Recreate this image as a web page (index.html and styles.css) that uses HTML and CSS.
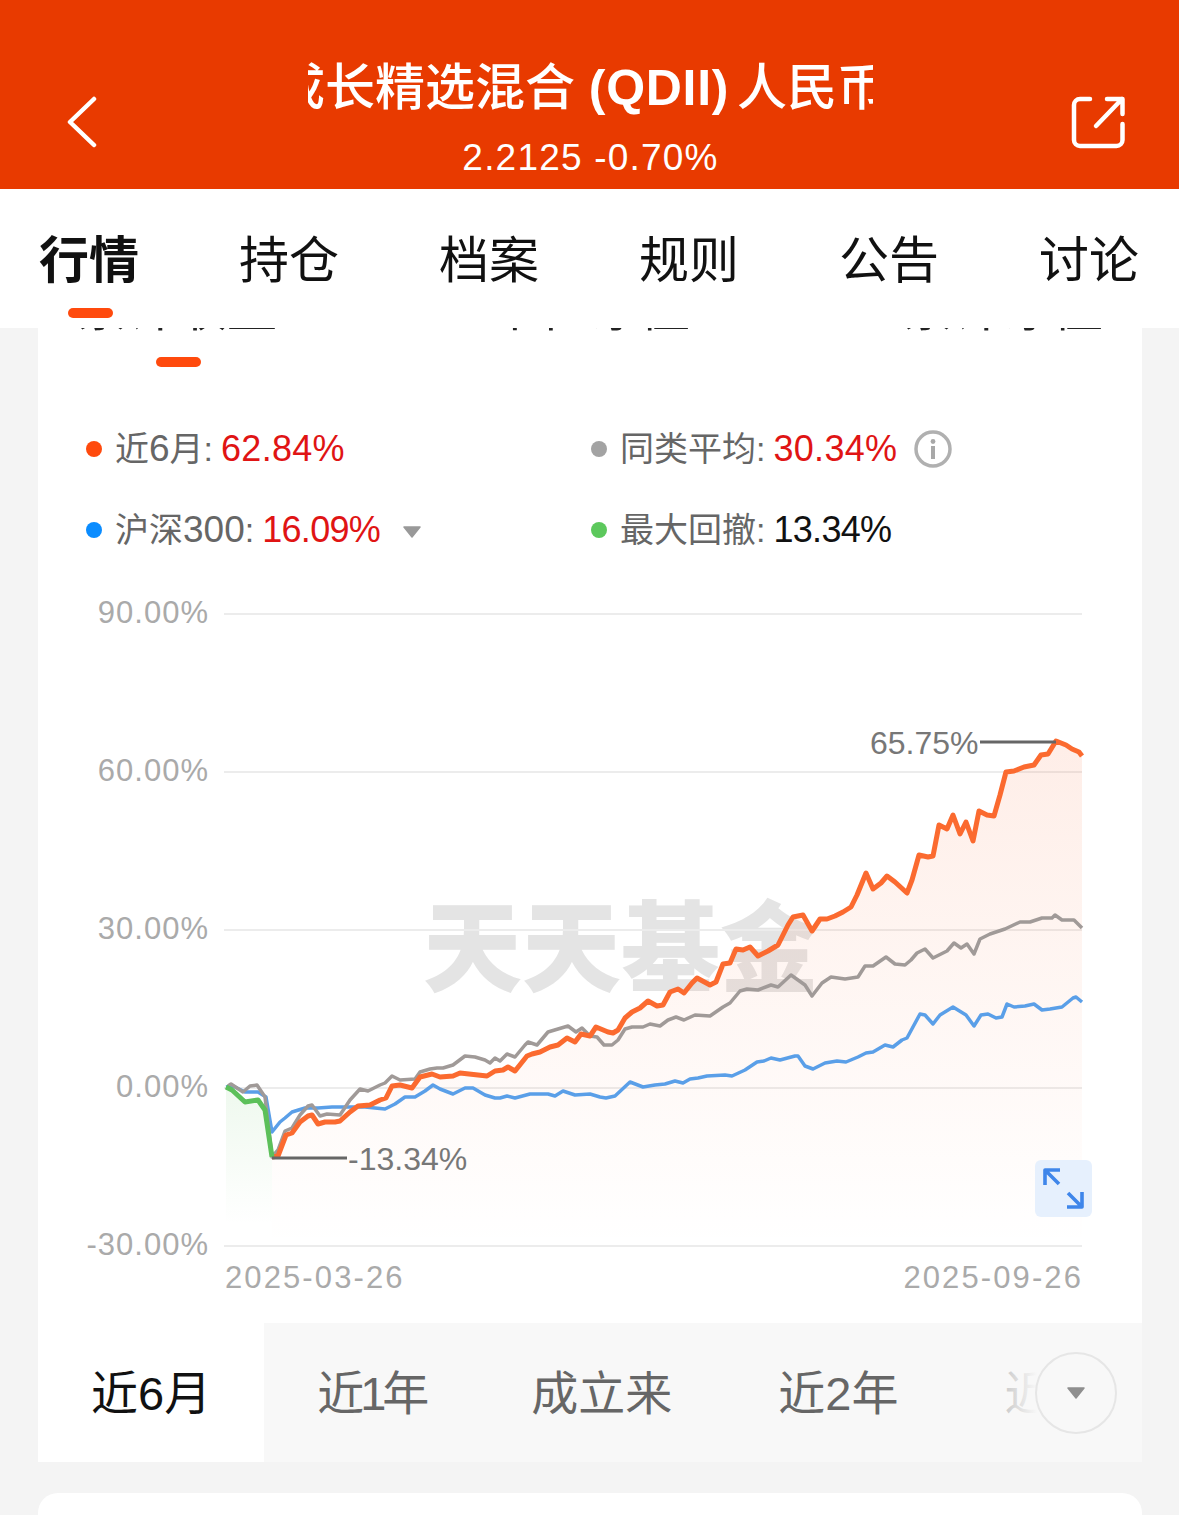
FILE: index.html

```html
<!DOCTYPE html>
<html lang="zh-CN">
<head>
  <meta charset="UTF-8" />
  <meta name="viewport" content="width=device-width, initial-scale=1.0"/>
  <title>成长精选混合 (QDII) 人民币</title>
  <link rel="stylesheet" href="styles.css">
</head>
<body>
  <header class="topbar">
    <svg class="topbar-icon" width="32" height="56" viewBox="0 0 32 56">
      <polyline points="29,5 5,28 29,51" fill="none" stroke="#fff" stroke-width="4.5" stroke-linecap="round" stroke-linejoin="round"/>
    </svg>
    <div class="topbar-center">
      <div class="fund-name"><span>成长精选混合 <b class="qdii">(QDII)</b>人民币</span></div>
      <div class="fund-price">2.2125 -0.70%</div>
    </div>
    <svg class="topbar-icon" width="58" height="56" viewBox="0 0 58 56">
      <path d="M21 5H11a6 6 0 0 0-6 6v35a6 6 0 0 0 6 6h36.5a6 6 0 0 0 6-6V30" fill="none" stroke="#fff" stroke-width="4.5" stroke-linecap="round"/>
      <path d="M27 32L53 5M38 5H53.5V20" fill="none" stroke="#fff" stroke-width="4.5" stroke-linecap="round" stroke-linejoin="round"/>
    </svg>
  </header>

  <nav class="tabs">
    <a class="tab tab-on">行情</a>
    <a class="tab">持仓</a>
    <a class="tab">档案</a>
    <a class="tab">规则</a>
    <a class="tab">公告</a>
    <a class="tab">讨论</a>
  </nav>

  <main class="page">
    <section class="card">
      <div class="subtabs">
        <div class="subtab subtab-on">累计收益</div>
        <div class="subtab">单位净值</div>
        <div class="subtab">累计净值</div>
      </div>

      <div class="legend">
        <div class="legend-item"><i class="dot dot-orange"></i><span class="legend-label">近<span class="num">6</span>月:</span><span class="legend-value up">62.84%</span></div>
        <div class="legend-item">
          <i class="dot dot-gray"></i><span class="legend-label">同类平均:</span><span class="legend-value up">30.34%</span>
          <svg class="info" width="38" height="38" viewBox="0 0 38 38">
            <circle cx="19" cy="19" r="17" fill="none" stroke="#b0b0b0" stroke-width="3.5"/>
            <circle cx="19" cy="11.5" r="2.4" fill="#a8a8a8"/>
            <rect x="17" y="16" width="4" height="13" fill="#a8a8a8"/>
          </svg>
        </div>
        <div class="legend-item">
          <i class="dot dot-blue"></i><span class="legend-label">沪深<span class="num">300</span>:</span><span class="legend-value value-tight up">16.09%</span>
          <svg class="caret" width="20" height="12" viewBox="0 0 20 12"><path d="M2 1H18L10 11Z" fill="#999" stroke="#999" stroke-width="1.5" stroke-linejoin="round"/></svg>
        </div>
        <div class="legend-item"><i class="dot dot-green"></i><span class="legend-label">最大回撤:</span><span class="legend-value value-tight">13.34%</span></div>
      </div>

      <div class="chart">
        <svg class="chart-svg" width="1104" height="753" viewBox="38 570 1104 753">
          <defs>
            <linearGradient id="fillOrange" gradientUnits="userSpaceOnUse" x1="0" y1="741" x2="0" y2="1246">
              <stop offset="0" stop-color="#f9622a" stop-opacity=".11"/>
              <stop offset="1" stop-color="#f9622a" stop-opacity="0"/>
            </linearGradient>
            <linearGradient id="fillGreen" gradientUnits="userSpaceOnUse" x1="0" y1="1090" x2="0" y2="1225">
              <stop offset="0" stop-color="#5cc05a" stop-opacity=".1"/>
              <stop offset="1" stop-color="#5cc05a" stop-opacity="0"/>
            </linearGradient>
          </defs>

          <text class="watermark" x="423" y="984">天天基金</text>

          <g class="grid">
            <line x1="224" x2="1082" y1="614" y2="614"/>
            <line x1="224" x2="1082" y1="772" y2="772"/>
            <line x1="224" x2="1082" y1="930" y2="930"/>
            <line x1="224" x2="1082" y1="1088" y2="1088"/>
            <line x1="224" x2="1082" y1="1246" y2="1246"/>
          </g>

          <g class="axis">
            <text x="209" y="623" text-anchor="end">90.00%</text>
            <text x="209" y="781" text-anchor="end">60.00%</text>
            <text x="209" y="939" text-anchor="end">30.00%</text>
            <text x="209" y="1097" text-anchor="end">0.00%</text>
            <text x="209" y="1255" text-anchor="end">-30.00%</text>
            <text class="axis-date" x="225" y="1288">2025-03-26</text>
            <text class="axis-date" x="1083" y="1288" text-anchor="end">2025-09-26</text>
          </g>

          <polygon fill="url(#fillGreen)" points="226,1087 232,1090 245,1102 258,1100 265,1110 272,1157 272,1225 226,1225"/>
          <polygon fill="url(#fillOrange)" points="272,1157 278,1156 286,1135 292,1133 300,1122 308,1116 312,1115 318,1124 325,1122 335,1122 340,1121 350,1112 358,1106 370,1105 380,1100 386,1098 392,1086 400,1085 412,1088 420,1077 432,1074 440,1077 453,1076 460,1073 487,1076 495,1071 503,1070 508,1067 515,1071 527,1056 532,1054 540,1052 550,1047 558,1045 567,1038 575,1042 581,1034 590,1036 596,1027 608,1032 613,1033 618,1030 625,1018 632,1012 640,1008 648,1001 657,1006 663,1005 670,992 678,989 684,993 692,983 697,978 710,985 716,982 723,964 730,963 736,949 743,950 750,947 758,956 768,951 778,945 788,925 793,917 803,915 812,931 820,919 827,919 835,916 843,912 851,907 857,895 866,873 873,889 881,883 887,876 895,882 907,893 912,880 919,855 928,857 933,856 939,825 947,829 953,815 960,834 966,822 973,841 979,811 987,815 994,816 1000,795 1006,772 1014,771 1024,767 1034,765 1041,755 1048,754 1056,741 1066,745 1072,749 1079,752 1082,756 1082,1246 272,1246"/>

          <polyline class="line line-blue" points="226,1087 233,1086 245,1092 258,1092 266,1097 272,1132 280,1122 285,1118 292,1112 305,1108 318,1108 332,1107 355,1107 365,1107 385,1109 395,1104 405,1097 415,1097 425,1091 433,1085 440,1089 453,1094 465,1088 473,1088 485,1095 495,1098 500,1098 507,1096 515,1098 530,1094 548,1094 555,1096 563,1091 575,1095 590,1094 600,1097 606,1098 615,1096 630,1082 643,1087 655,1085 665,1084 675,1081 683,1083 690,1079 698,1078 707,1076 725,1075 732,1076 745,1070 757,1062 764,1061 771,1058 780,1060 795,1056 798,1056 805,1066 813,1069 825,1063 837,1061 846,1062 858,1057 866,1053 873,1052 885,1045 893,1047 902,1040 907,1038 920,1014 925,1015 933,1024 940,1015 953,1007 966,1015 974,1026 981,1015 988,1014 996,1018 1002,1017 1007,1004 1014,1007 1025,1006 1034,1004 1042,1010 1050,1009 1062,1007 1073,998 1076,997 1082,1002"/>
          <polyline class="line line-gray" points="228,1086 231,1084 243,1092 250,1086 257,1085 265,1097 272,1157 278,1150 285,1131 292,1128 300,1115 308,1106 312,1105 320,1116 327,1114 340,1115 350,1100 360,1089 368,1091 380,1085 385,1083 392,1076 400,1080 415,1079 420,1072 430,1069 437,1068 443,1068 453,1065 465,1056 475,1057 485,1060 490,1063 495,1058 500,1061 507,1054 515,1057 525,1045 528,1042 537,1045 548,1032 568,1026 576,1032 582,1028 590,1036 597,1037 604,1045 612,1045 618,1040 625,1029 632,1027 643,1027 650,1024 660,1026 668,1020 676,1017 684,1020 695,1015 710,1016 723,1007 730,1003 740,991 747,989 758,990 771,985 778,987 791,975 805,985 812,996 822,983 831,977 845,979 858,977 865,966 873,966 886,957 895,964 905,965 911,960 917,953 925,949 933,958 947,951 954,943 961,948 967,944 974,954 980,939 990,934 1005,929 1020,922 1030,922 1042,918 1052,918 1055,915 1062,920 1074,920 1082,928"/>
          <polyline class="line line-orange" points="272,1157 278,1156 286,1135 292,1133 300,1122 308,1116 312,1115 318,1124 325,1122 335,1122 340,1121 350,1112 358,1106 370,1105 380,1100 386,1098 392,1086 400,1085 412,1088 420,1077 432,1074 440,1077 453,1076 460,1073 487,1076 495,1071 503,1070 508,1067 515,1071 527,1056 532,1054 540,1052 550,1047 558,1045 567,1038 575,1042 581,1034 590,1036 596,1027 608,1032 613,1033 618,1030 625,1018 632,1012 640,1008 648,1001 657,1006 663,1005 670,992 678,989 684,993 692,983 697,978 710,985 716,982 723,964 730,963 736,949 743,950 750,947 758,956 768,951 778,945 788,925 793,917 803,915 812,931 820,919 827,919 835,916 843,912 851,907 857,895 866,873 873,889 881,883 887,876 895,882 907,893 912,880 919,855 928,857 933,856 939,825 947,829 953,815 960,834 966,822 973,841 979,811 987,815 994,816 1000,795 1006,772 1014,771 1024,767 1034,765 1041,755 1048,754 1056,741 1066,745 1072,749 1079,752 1082,756"/>
          <polyline class="line line-green" points="226,1087 232,1090 245,1102 258,1100 265,1110 272,1157"/>

          <line class="mark" x1="980" x2="1056" y1="742" y2="742"/>
          <text class="mark-label" x="870" y="754">65.75%</text>
          <line class="mark" x1="272" x2="347" y1="1158" y2="1158"/>
          <text class="mark-label" x="348" y="1170">-13.34%</text>
        </svg>

        <button class="expand">
          <svg width="57" height="57" viewBox="0 0 57 57">
            <path d="M25 10H10V25M10 10L24 24M47 32V47H32M47 47L33 33" fill="none" stroke="#3f86ea" stroke-width="3.6" stroke-linejoin="round"/>
          </svg>
        </button>
      </div>

      <div class="periods">
        <div class="period-list">
          <div class="period period-on">近6月</div>
          <div class="period period-tight">近1年</div>
          <div class="period">成立来</div>
          <div class="period">近2年</div>
          <div class="period">近3年</div>
          <div class="period">近5年</div>
        </div>
        <div class="period-fade"></div>
        <div class="period-more">
          <svg width="20" height="12" viewBox="0 0 20 12"><path d="M2 1H18L10 11Z" fill="#8f8f8f" stroke="#8f8f8f" stroke-width="1.5" stroke-linejoin="round"/></svg>
        </div>
      </div>
    </section>

    <section class="card card-next"></section>
  </main>
</body>
</html>
```

FILE: styles.css

```css
* {
  box-sizing: border-box;
}
html, body {
  margin: 0;
  height: 1515px;
  overflow: hidden;
}
body {
  font-family: "Liberation Sans", "Noto Sans CJK SC", sans-serif;
  background-color: #f4f4f4;
  color: #111;
  display: flex;
  flex-direction: column;
}

/* top bar */
.topbar {
  height: 189px;
  flex: none;
  background-color: #e83a00;
  color: white;
  display: flex;
  align-items: flex-start;
  justify-content: space-between;
  padding: 94px 52px 0 65px;
}
.topbar-icon {
  flex: none;
}
.topbar-center {
  position: absolute;
  top: 58px;
  left: 308px;
  width: 565px;
  text-align: center;
}
.fund-name {
  height: 60px;
  line-height: 60px;
  font-size: 50px;
  font-weight: 500;
  overflow: hidden;
  white-space: nowrap;
  display: flex;
  justify-content: center;
}
.fund-name span {
  flex: none;
  margin-right: 19px;
}
.qdii {
  font-weight: 700;
  letter-spacing: .7px;
  margin-right: 8px;
}
.fund-price {
  margin-top: 18px;
  font-size: 37px;
  line-height: 44px;
  letter-spacing: 1.2px;
}

/* main tabs */
.tabs {
  height: 139px;
  flex: none;
  background: white;
  display: flex;
  justify-content: space-between;
  padding: 41px 40px 0 39px;
}
.tab {
  width: 100px;
  height: 88px;
  font-size: 50px;
  line-height: 62px;
  white-space: nowrap;
}
.tab-on {
  font-weight: 700;
  display: flex;
  flex-direction: column;
  align-items: center;
}
.tab-on::after {
  content: "";
  width: 45px;
  height: 10px;
  margin: 16px 0 0 3px;
  border-radius: 5px;
  background-color: #ff4a0d;
}

/* page */
.page {
  flex: 1;
  overflow: hidden;
  padding: 0 37px 0 38px;
}
.card {
  background: white;
}
.subtabs {
  margin-top: -44px;
  padding: 0 39px;
  height: 124px;
  display: flex;
  justify-content: space-between;
  align-items: flex-start;
}
.subtab {
  font-size: 50px;
  line-height: 50px;
  color: #222;
}
.subtab-on {
  display: flex;
  flex-direction: column;
  align-items: center;
}
.subtab-on::after {
  content: "";
  width: 45px;
  height: 10px;
  margin: 23px 0 0 3px;
  border-radius: 5px;
  background-color: #ff4a0d;
}

/* legend */
.legend {
  padding: 0 0 0 48px;
  display: grid;
  grid-template-columns: 505px 1fr;
  grid-auto-rows: 81px;
}
.legend-item {
  display: flex;
  align-items: center;
  white-space: nowrap;
}
.dot {
  width: 16px;
  height: 16px;
  border-radius: 50%;
  margin-right: 13px;
}
.dot-orange { background-color: #ff4a0d; }
.dot-gray { background-color: #a3a3a3; }
.dot-blue { background-color: #0a8cff; }
.dot-green { background-color: #5cc85c; }
.legend-label {
  font-size: 34px;
  color: #666;
  margin-top: -5px;
}
.num {
  font-size: 37px;
}
.legend-value {
  font-size: 36px;
  margin-left: 8px;
  letter-spacing: .3px;
  color: #111;
}
.legend-value.up {
  color: #e01414;
}
.legend-value.value-tight {
  letter-spacing: -.7px;
}
.info {
  margin-left: 17px;
}
.caret {
  margin-left: 22px;
  margin-top: 4px;
}

/* chart */
.chart {
  position: relative;
  height: 753px;
}
.chart-svg {
  display: block;
}
.watermark {
  font-size: 99px;
  font-weight: 900;
  fill: #e4e4e4;
}
.grid line {
  stroke: #ececec;
  stroke-width: 2;
}
.axis text {
  font-size: 31px;
  letter-spacing: 1px;
  fill: #aaa;
}
.axis .axis-date {
  letter-spacing: 2.1px;
}
.line {
  fill: none;
  stroke-linejoin: round;
}
.line-orange { stroke: #fb6a2f; stroke-width: 5; }
.line-gray { stroke: #a09a98; stroke-width: 3.5; }
.line-blue { stroke: #5a9fe8; stroke-width: 3.5; }
.line-green { stroke: #5cc05a; stroke-width: 5; }
.mark {
  stroke: #666;
  stroke-width: 3;
}
.mark-label {
  font-size: 32px;
  fill: #777;
}
.expand {
  position: absolute;
  right: 50px;
  bottom: 106px;
  width: 57px;
  height: 57px;
  padding: 0;
  border: none;
  border-radius: 6px;
  background-color: #e6f0fd;
}
.expand svg {
  display: block;
}

/* period tabs */
.periods {
  position: relative;
  height: 139px;
  background-color: #f8f8f8;
  overflow: hidden;
}
.period-list {
  display: flex;
  white-space: nowrap;
}
.period {
  flex: none;
  height: 139px;
  padding: 0 53px;
  font-size: 47px;
  line-height: 141px;
  color: #666;
}
.period-on {
  background: white;
  color: #111;
}
.period-tight {
  letter-spacing: -4px;
}
.period-fade {
  position: absolute;
  top: 0;
  right: 0;
  bottom: 0;
  width: 210px;
  background: linear-gradient(to right, rgba(248,248,248,0), #f8f8f8 50%);
}
.period-more {
  position: absolute;
  top: 29px;
  right: 25px;
  width: 82px;
  height: 82px;
  border: 2px solid #e6e6e6;
  border-radius: 50%;
  background-color: #f8f8f8;
  display: flex;
  align-items: center;
  justify-content: center;
}

.card-next {
  height: 80px;
  margin-top: 31px;
  border-radius: 20px 20px 0 0;
}
```
